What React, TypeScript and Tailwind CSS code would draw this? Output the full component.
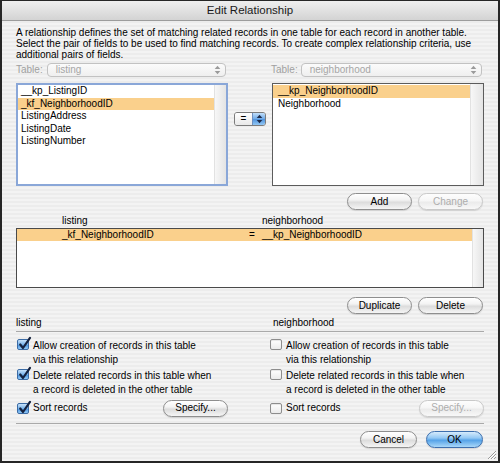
import React from 'react';

const FONT = "font-['Liberation_Sans',Arial,sans-serif]";

function Arrows({ color }: { color: string }) {
  return (
    <svg width="7" height="10" viewBox="0 0 7 10">
      <path d="M3.5 0.8L6.3 4H0.7Z" fill={color} />
      <path d="M3.5 9.2L6.3 6H0.7Z" fill={color} />
    </svg>
  );
}

function TablePopup({ value, width }: { value: string; width: string }) {
  return (
    <div className={`${width} h-[14px] flex rounded-[4px] border border-[#c2c2c2] bg-[linear-gradient(to_bottom,#fbfbfb,#efefef)]`}>
      <div className="flex-1 pl-[8px] text-[10px] leading-[12px] text-[#a6a6a6]">{value}</div>
      <div className="w-[14px] flex items-center justify-center">
        <Arrows color="#9a9a9a" />
      </div>
    </div>
  );
}

type Kind = 'normal' | 'disabled' | 'primary';

function AquaButton({ label, kind = 'normal', width = 'w-[65px]' }: { label: string; kind?: Kind; width?: string }) {
  const styles: Record<Kind, string> = {
    normal:
      'border-[#8e8e8e] text-black bg-[linear-gradient(to_bottom,#ffffff_0%,#f3f3f3_40%,#dcdcdc_55%,#f5f5f5_100%)]',
    disabled:
      'border-[#c9c9c9] text-[#adadad] bg-[linear-gradient(to_bottom,#fdfdfd_0%,#f6f6f6_45%,#ebebeb_55%,#f8f8f8_100%)]',
    primary:
      'border-[#3d6fae] text-black bg-[linear-gradient(to_bottom,#d6ebfc_0%,#93c8f4_40%,#56a3e8_55%,#a9d8f9_100%)]',
  };
  return (
    <div
      className={`${width} h-[17px] rounded-full border flex items-center justify-center text-[10px] leading-none shadow-[0_1px_1px_rgba(0,0,0,0.12)] ${styles[kind]}`}
    >
      {label}
    </div>
  );
}

function Check({ checked }: { checked: boolean }) {
  if (checked) {
    return (
      <div className="relative w-[12px] h-[11px] shrink-0 rounded-[2px] border border-[#3b6ba5] bg-[linear-gradient(to_bottom,#c8e2fa_0%,#78b3ea_50%,#4590e0_51%,#92c9f5_100%)]">
        <svg className="absolute left-[0px] top-[-4px]" width="14" height="15" viewBox="0 0 14 15">
          <path
            d="M2.2 8.5 L5 12 L12 1.8"
            stroke="#15223f"
            strokeWidth="2.2"
            fill="none"
            strokeLinecap="round"
            strokeLinejoin="round"
          />
        </svg>
      </div>
    );
  }
  return (
    <div className="w-[12px] h-[11px] shrink-0 rounded-[2px] border border-[#8d8d8d] bg-[linear-gradient(to_bottom,#ffffff,#ebebeb)] shadow-[inset_0_1px_1px_rgba(0,0,0,0.1)]" />
  );
}

function CheckRow({ checked, lines }: { checked: boolean; lines: string[] }) {
  return (
    <div className="flex items-start">
      <div className="ml-[1px] mt-[0px]">
        <Check checked={checked} />
      </div>
      <div className="ml-[4px] text-[10px] leading-[14px] whitespace-nowrap">
        {lines.map((l) => (
          <div key={l}>{l}</div>
        ))}
      </div>
    </div>
  );
}

function ScrollTrack({ width }: { width: string }) {
  return (
    <div className={`${width} shrink-0 border-l border-[#e2e2e2] bg-[linear-gradient(to_right,#f7f7f7,#e4e4e4)]`} />
  );
}

function Section({ checked, kind }: { checked: boolean; kind: Kind }) {
  return (
    <div className="flex flex-col">
      <CheckRow checked={checked} lines={['Allow creation of records in this table', 'via this relationship']} />
      <div className="mt-[2px]">
        <CheckRow
          checked={checked}
          lines={['Delete related records in this table when', 'a record is deleted in the other table']}
        />
      </div>
      <div className="mt-[2px] h-[18px] flex items-center">
        <div className="ml-[1px]">
          <Check checked={checked} />
        </div>
        <div className="ml-[4px] text-[10px] leading-[14px]">Sort records</div>
        <div className="ml-auto">
          <AquaButton label="Specify..." kind={kind} />
        </div>
      </div>
    </div>
  );
}

export default function App() {
  const leftFields = ['__kp_ListingID', '_kf_NeighborhoodID', 'ListingAddress', 'ListingDate', 'ListingNumber'];
  const rightFields = ['__kp_NeighborhoodID', 'Neighborhood'];

  return (
    <div
      className={`${FONT} relative w-[500px] h-[463px] flex flex-col border-t border-x-2 border-b-2 border-[#262626] text-black bg-[repeating-linear-gradient(to_bottom,#ececec_0px,#ececec_2px,#f3f3f3_2px,#f3f3f3_4px)]`}
    >
      {/* Title bar */}
      <div className="h-[20px] shrink-0 flex items-center justify-center border-b border-[#9c9c9c] bg-[linear-gradient(to_bottom,#efefef,#d3d3d3)] text-[11.5px] text-[#1a1a1a]">
        Edit Relationship
      </div>

      <div className="flex-1 flex flex-col px-[14px]">
        {/* Description */}
        <div className="mt-[6px] text-[10px] leading-[11px] whitespace-nowrap">
          <div>A relationship defines the set of matching related records in one table for each record in another table.</div>
          <div>Select the pair of fields to be used to find matching records. To create complex relationship criteria, use</div>
          <div>additional pairs of fields.</div>
        </div>

        {/* Table selectors */}
        <div className="mt-[3px] h-[14px] grid grid-cols-[256px_212px]">
          <div className="flex items-center">
            <span className="text-[10px] leading-[12px] text-[#a0a0a0]">Table:</span>
            <div className="ml-[4px]">
              <TablePopup value="listing" width="w-[179px]" />
            </div>
          </div>
          <div className="flex items-center -ml-[1px]">
            <span className="text-[10px] leading-[12px] text-[#a0a0a0]">Table:</span>
            <div className="ml-[3px]">
              <TablePopup value="neighborhood" width="w-[181px]" />
            </div>
          </div>
        </div>

        {/* Field lists */}
        <div className="mt-[6px] h-[103px] grid grid-cols-[212px_44px_212px]">
          <div className="flex border-2 border-[#8aa7d8] bg-white">
            <div className="flex-1 pt-[0px]">
              {leftFields.map((f, i) => (
                <div
                  key={f}
                  className={
                    i === 1
                      ? 'h-[12.5px] pl-[3px] text-[10px] leading-[12.5px] bg-[#fad08c]'
                      : 'h-[12.5px] pl-[3px] text-[10px] leading-[12.5px]'
                  }
                >
                  {f}
                </div>
              ))}
            </div>
            <ScrollTrack width="w-[12px]" />
          </div>

          <div className="flex justify-center pt-[29px]">
            <div className="w-[32px] h-[14px] flex rounded-[3px] border border-[#7b7b7b] overflow-hidden">
              <div className="flex-1 flex items-center justify-center bg-[linear-gradient(to_bottom,#ffffff,#e9e9e9)] text-[10px] leading-none">
                =
              </div>
              <div className="w-[13px] flex items-center justify-center border-l border-[#6d8fc0] bg-[linear-gradient(to_bottom,#c2dffa,#6ea9e6_50%,#4e92dd_51%,#93c7f3)]">
                <Arrows color="#1d2a48" />
              </div>
            </div>
          </div>

          <div className="flex border border-[#5c5c5c] bg-white">
            <div className="flex-1 pt-[1px]">
              {rightFields.map((f, i) => (
                <div
                  key={f}
                  className={
                    i === 0
                      ? 'h-[12.5px] pl-[5px] text-[10px] leading-[12.5px] bg-[#fad08c]'
                      : 'h-[12.5px] pl-[5px] text-[10px] leading-[12.5px]'
                  }
                >
                  {f}
                </div>
              ))}
            </div>
            <ScrollTrack width="w-[13px]" />
          </div>
        </div>

        {/* Add / Change */}
        <div className="mt-[7px] flex justify-end gap-[6px] pr-[1px]">
          <AquaButton label="Add" />
          <AquaButton label="Change" kind="disabled" />
        </div>

        {/* Relationship header */}
        <div className="mt-[5px] h-[12px] flex text-[10px] leading-[12px]">
          <span className="ml-[46px] w-[200px]">listing</span>
          <span>neighborhood</span>
        </div>

        {/* Relationship criteria list */}
        <div className="mt-[1px] h-[60px] flex border border-[#4a4a4a] bg-white">
          <div className="flex-1">
            <div className="h-[12px] flex text-[10px] leading-[12px] bg-[#fad08c]">
              <span className="ml-[45px] w-[187px]">_kf_NeighborhoodID</span>
              <span className="w-[13px]">=</span>
              <span>__kp_NeighborhoodID</span>
            </div>
          </div>
          <ScrollTrack width="w-[11px]" />
        </div>

        {/* Duplicate / Delete */}
        <div className="mt-[9px] flex justify-end gap-[6px] pr-[1px]">
          <AquaButton label="Duplicate" />
          <AquaButton label="Delete" />
        </div>

        {/* Options */}
        <div className="mt-[3px] h-[15px] grid grid-cols-[253px_215px] border-b border-[#a9a9a9] text-[10px] leading-[12px]">
          <span>listing</span>
          <span className="pl-[4px]">neighborhood</span>
        </div>

        <div className="mt-[7px] grid grid-cols-[212px_41px_215px]">
          <Section checked={true} kind="normal" />
          <div />
          <Section checked={false} kind="disabled" />
        </div>

        <div className="mt-[6px] border-t border-[#a9a9a9]" />

        {/* Dialog buttons */}
        <div className="mt-[7px] flex justify-end gap-[9px] pr-[1px]">
          <AquaButton label="Cancel" width="w-[57px]" />
          <AquaButton label="OK" kind="primary" width="w-[57px]" />
        </div>
      </div>

      {/* Resize grip */}
      <svg className="absolute right-[1px] bottom-[1px]" width="12" height="12" viewBox="0 0 12 12">
        <path d="M11 3 L3 11 M11 6 L6 11 M11 9 L9 11" stroke="#9a9a9a" strokeWidth="1" />
        <path d="M11 4 L4 11 M11 7 L7 11" stroke="#ffffff" strokeWidth="1" />
      </svg>
    </div>
  );
}
